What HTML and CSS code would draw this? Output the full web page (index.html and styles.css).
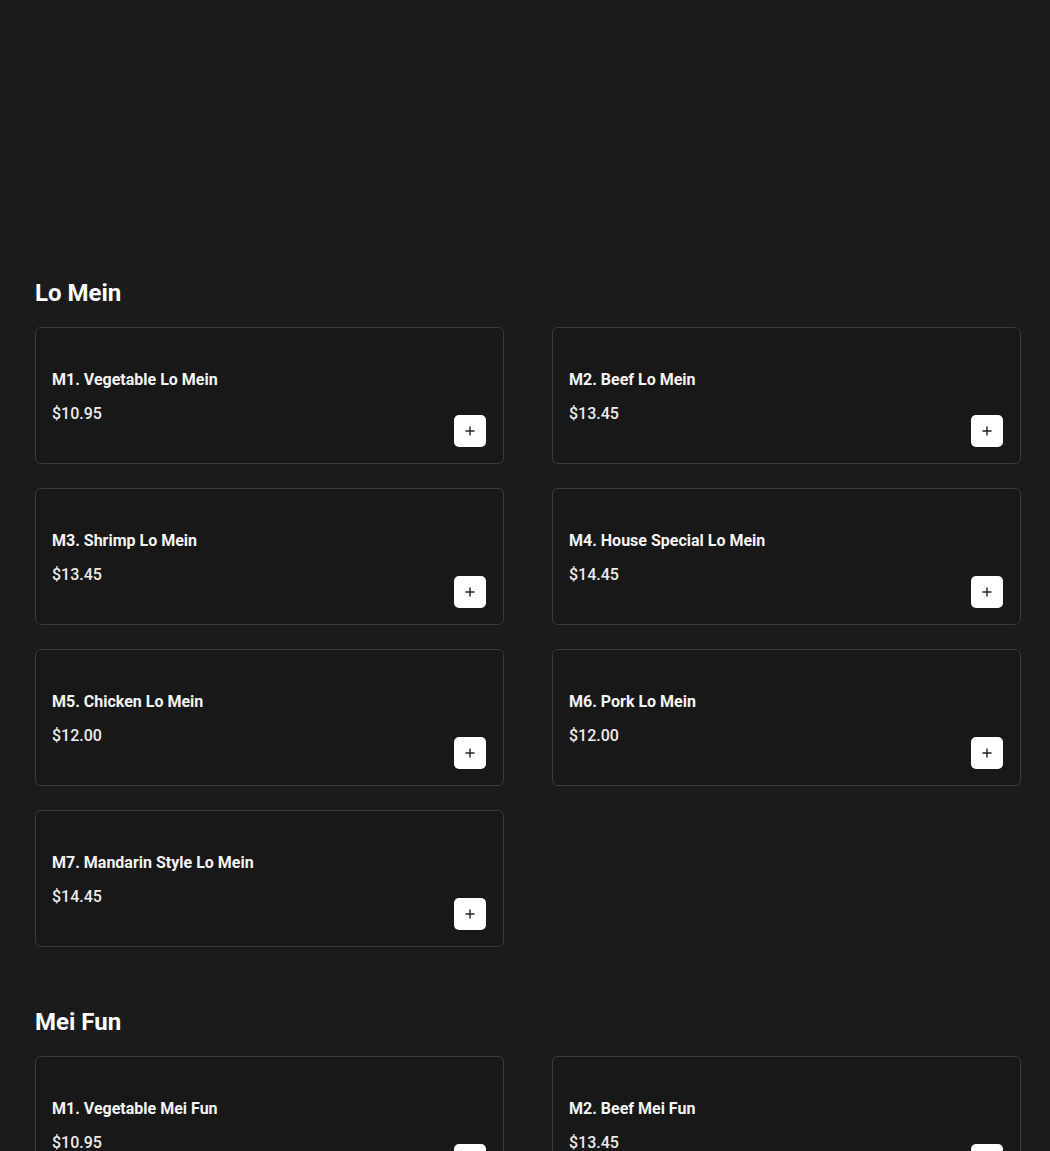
FILE: index.html
```html
<!DOCTYPE html>
<html>
<head>
<meta charset="utf-8">
<link rel="stylesheet" href="styles.css">
</head>
<body>
<main class="menu">
  <section class="section">
    <h2 class="section-title">Lo Mein</h2>
    <div class="grid">
      <div class="card"><div class="info"><div class="name">M1. Vegetable Lo Mein</div><div class="price">$10.95</div></div><button class="add"><svg viewBox="0 0 12 12" width="12" height="12"><path d="M6 1.5v9M1.5 6h9" stroke="#222" stroke-width="1.4" fill="none"/></svg></button></div>
      <div class="card"><div class="info"><div class="name">M2. Beef Lo Mein</div><div class="price">$13.45</div></div><button class="add"><svg viewBox="0 0 12 12" width="12" height="12"><path d="M6 1.5v9M1.5 6h9" stroke="#222" stroke-width="1.4" fill="none"/></svg></button></div>
      <div class="card"><div class="info"><div class="name">M3. Shrimp Lo Mein</div><div class="price">$13.45</div></div><button class="add"><svg viewBox="0 0 12 12" width="12" height="12"><path d="M6 1.5v9M1.5 6h9" stroke="#222" stroke-width="1.4" fill="none"/></svg></button></div>
      <div class="card"><div class="info"><div class="name">M4. House Special Lo Mein</div><div class="price">$14.45</div></div><button class="add"><svg viewBox="0 0 12 12" width="12" height="12"><path d="M6 1.5v9M1.5 6h9" stroke="#222" stroke-width="1.4" fill="none"/></svg></button></div>
      <div class="card"><div class="info"><div class="name">M5. Chicken Lo Mein</div><div class="price">$12.00</div></div><button class="add"><svg viewBox="0 0 12 12" width="12" height="12"><path d="M6 1.5v9M1.5 6h9" stroke="#222" stroke-width="1.4" fill="none"/></svg></button></div>
      <div class="card"><div class="info"><div class="name">M6. Pork Lo Mein</div><div class="price">$12.00</div></div><button class="add"><svg viewBox="0 0 12 12" width="12" height="12"><path d="M6 1.5v9M1.5 6h9" stroke="#222" stroke-width="1.4" fill="none"/></svg></button></div>
      <div class="card"><div class="info"><div class="name">M7. Mandarin Style Lo Mein</div><div class="price">$14.45</div></div><button class="add"><svg viewBox="0 0 12 12" width="12" height="12"><path d="M6 1.5v9M1.5 6h9" stroke="#222" stroke-width="1.4" fill="none"/></svg></button></div>
    </div>
  </section>
  <section class="section">
    <h2 class="section-title">Mei Fun</h2>
    <div class="grid">
      <div class="card"><div class="info"><div class="name">M1. Vegetable Mei Fun</div><div class="price">$10.95</div></div><button class="add"><svg viewBox="0 0 12 12" width="12" height="12"><path d="M6 1.5v9M1.5 6h9" stroke="#222" stroke-width="1.4" fill="none"/></svg></button></div>
      <div class="card"><div class="info"><div class="name">M2. Beef Mei Fun</div><div class="price">$13.45</div></div><button class="add"><svg viewBox="0 0 12 12" width="12" height="12"><path d="M6 1.5v9M1.5 6h9" stroke="#222" stroke-width="1.4" fill="none"/></svg></button></div>
    </div>
  </section>
</main>
</body>
</html>
```
FILE: styles.css
```css
html, body {
  margin: 0;
  padding: 0;
  background: #1b1b1b;
  color: #fff;
  font-family: Roboto, "Liberation Sans", sans-serif;
}
.menu {
  padding: 277px 30px 40px 35px;
  display: flex;
  flex-direction: column;
  gap: 59px;
}
.section-title {
  margin: 0 0 18px 0;
  font-size: 24px;
  line-height: 32px;
  font-weight: 700;
  color: #fff;
}
.grid {
  display: grid;
  grid-template-columns: 469px 469px;
  column-gap: 48px;
  row-gap: 24px;
}
.card {
  box-sizing: border-box;
  height: 137px;
  background: #181818;
  border: 1px solid #3a3a3a;
  border-radius: 6px;
  padding: 16px 17px 16px 16px;
  display: flex;
  justify-content: space-between;
  align-items: flex-end;
}
.info {
  align-self: flex-start;
  padding-top: 24px;
  display: flex;
  flex-direction: column;
  gap: 10px;
}
.name {
  font-size: 16px;
  line-height: 24px;
  font-weight: 700;
  color: #f4f4f4;
}
.price {
  font-size: 16px;
  line-height: 24px;
  font-weight: 500;
  color: #ececec;
}
.add {
  width: 32px;
  height: 32px;
  padding: 0;
  border: none;
  border-radius: 5px;
  background: #fff;
  display: flex;
  align-items: center;
  justify-content: center;
  cursor: pointer;
}
```
